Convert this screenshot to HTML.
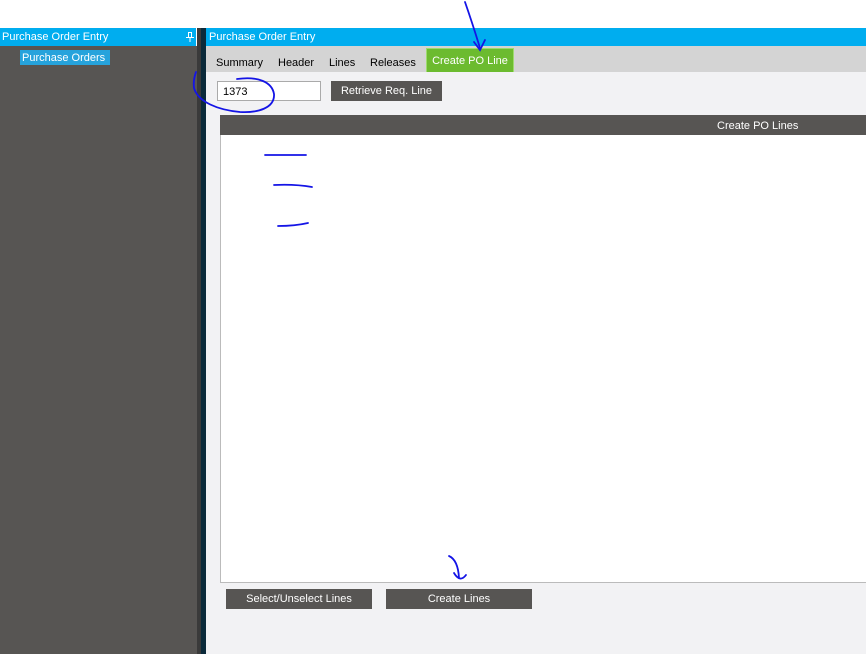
<!DOCTYPE html>
<html><head><style>
body{margin:0;width:866px;height:654px;position:relative;overflow:hidden;background:#fff;font-family:"Liberation Sans",sans-serif;font-size:11px}
div{position:absolute;box-sizing:border-box}
.btn{background:#575553;color:#fff;text-align:center;line-height:21px}
</style></head><body>
<div style="left:0;top:28px;width:196px;height:18px;background:#00adef;color:#fff;line-height:19px;padding-left:2px">Purchase Order Entry</div>
<svg style="position:absolute;left:186px;top:32px" width="8" height="10" fill="#fff"><rect x="2" y="0" width="4" height="1"/><rect x="2" y="0" width="1" height="5"/><rect x="5" y="0" width="1" height="5"/><rect x="0" y="5" width="8" height="1"/><rect x="3.5" y="5" width="1" height="5"/></svg>
<div style="left:0;top:46px;width:197px;height:608px;background:#575553"></div>
<div style="left:20px;top:50px;width:90px;height:15px;background:#26a3dc;color:#fff;line-height:16px;padding-left:2px">Purchase Orders</div>
<div style="left:197px;top:28px;width:4px;height:626px;background:#3a3a3a"></div>
<div style="left:201px;top:28px;width:5px;height:626px;background:#0b2a3a"></div>
<div style="left:206px;top:28px;width:660px;height:18px;background:#00adef;color:#fff;line-height:19px;padding-left:3px">Purchase Order Entry</div>
<div style="left:206px;top:46px;width:660px;height:26px;background:#d4d4d4"></div>
<div style="left:206px;top:72px;width:660px;height:582px;background:#f2f2f4"></div>
<div style="left:216px;top:57px">Summary</div>
<div style="left:278px;top:57px">Header</div>
<div style="left:329px;top:57px">Lines</div>
<div style="left:370px;top:57px">Releases</div>
<div style="left:426px;top:48px;width:88px;height:24px;background:#6cbb2f;border:1px solid #9edb6e;border-bottom:none;color:#fff;text-align:center;line-height:24px">Create PO Line</div>
<div style="left:217px;top:81px;width:104px;height:20px;background:#fff;border:1px solid #aaa;line-height:20px;padding-left:5px">1373</div>
<div class="btn" style="left:331px;top:81px;width:111px;height:20px">Retrieve Req. Line</div>
<div style="left:220px;top:115px;width:646px;height:468px;background:#fff;border:1px solid #bbb;border-right:none"></div>
<div style="left:220px;top:115px;width:646px;height:20px;background:#575553;color:#fff;line-height:23px;padding-left:497px">Create PO Lines</div>
<div class="btn" style="left:226px;top:589px;width:146px;height:20px">Select/Unselect Lines</div>
<div class="btn" style="left:386px;top:589px;width:146px;height:20px">Create Lines</div>
<svg style="position:absolute;left:0;top:0" width="866" height="654" fill="none" stroke="#1414e6" stroke-width="1.8" stroke-linecap="round">
<path d="M465 2 Q472 22 480 48 M474 42 L480 50 L485 40"/>
<path d="M237 79 C258 76 272 82 274 94 C275 108 258 113 240 112 C218 110 198 102 194 88 C193 80 195 75 196 72"/>
<path d="M265 155 L306 155"/><path d="M274 185 Q295 184 312 187"/><path d="M278 226 Q295 226 308 223"/>
<path d="M449 556 Q458 560 459 578 M454 573 Q460 583 466 575"/>
</svg>
</body></html>
